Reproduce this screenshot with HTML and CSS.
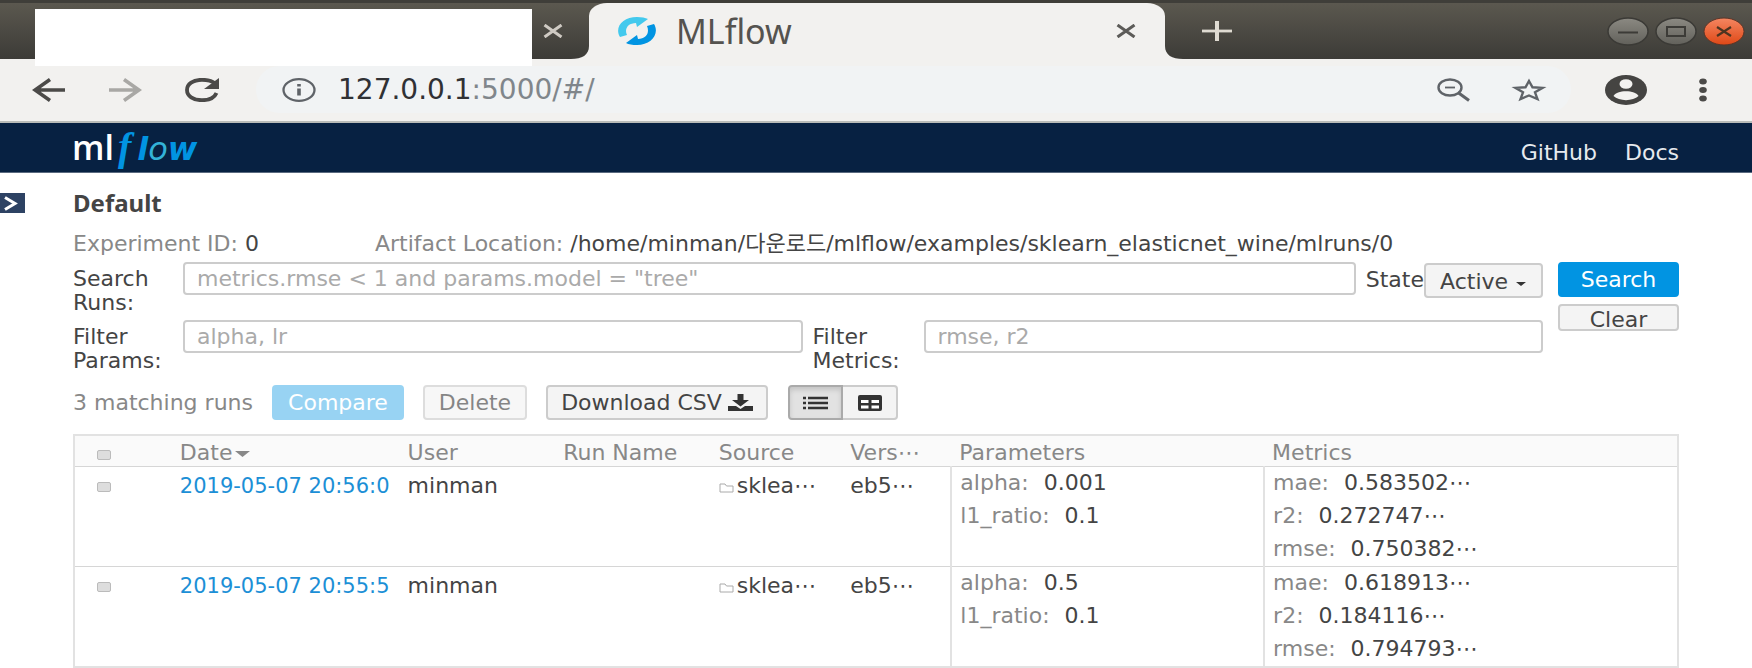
FILE: index.html
```html
<!DOCTYPE html>
<html lang="en">
<head>
<meta charset="utf-8">
<title>MLflow</title>
<link rel="stylesheet" href="styles.css">
</head>
<body>
<header class="browser">
  <div class="tabstrip">
    <div class="tab-blank"></div>
    <button class="icon-btn tab-close" aria-label="Close tab"><svg width="20" height="14" viewBox="0 0 20 14"><path d="M1.500 1L18.500 13M18.500 1L1.500 13" stroke="#cfcac3" stroke-width="3"/></svg></button>
    <div class="tab-active">
      <svg class="tab-curve left" width="18" height="13" viewBox="0 0 18 13"><path d="M18 0V13H0C11 13 18 9 18 0Z" fill="#f2f1ef"/></svg>
      <svg width="40" height="28" viewBox="0 0 40 28"><path d="M3 20C-3 10 6 0 20 0Q27 0 31 2L20 10L19 6C11 6 7 12 10 18Z" fill="#43c9ed"/><path d="M37 7C43 17 34 28 20 28Q13 28 9 26L20 18L21 22C29 22 33 16 30 9Z" fill="#0194e2"/></svg>
      <span class="tab-title">MLflow</span>
      <button class="icon-btn" aria-label="Close tab"><svg width="20" height="14" viewBox="0 0 20 14"><path d="M1.500 1L18.500 13M18.500 1L1.500 13" stroke="#5c5b58" stroke-width="3"/></svg></button>
      <svg class="tab-curve right" width="18" height="13" viewBox="0 0 18 13"><path d="M0 0V13H18C7 13 0 9 0 0Z" fill="#f2f1ef"/></svg>
    </div>
    <button class="icon-btn tab-new" aria-label="New tab"><svg width="30" height="20" viewBox="0 0 30 20"><path d="M0 10H30" stroke="#dfdbd2" stroke-width="2.800"/><path d="M15 0V20" stroke="#dfdbd2" stroke-width="4"/></svg></button>
    <div class="window-controls">
      <button class="icon-btn" aria-label="Minimize"><svg width="42" height="29" viewBox="0 0 42 29"><defs><linearGradient id="grey" x2="0" y2="1"><stop stop-color="#8b8982"/><stop offset="1" stop-color="#62615b"/></linearGradient><linearGradient id="orange" x2="0" y2="1"><stop stop-color="#f48661"/><stop offset="1" stop-color="#df4816"/></linearGradient></defs><ellipse cx="21" cy="14.500" rx="20" ry="13.500" fill="url(#grey)" stroke="#3b3a36" stroke-width="1.500"/><path d="M11 15.500H31" stroke="#3c3b37" stroke-width="2"/></svg></button>
      <button class="icon-btn" aria-label="Maximize"><svg width="42" height="29" viewBox="0 0 42 29"><ellipse cx="21" cy="14.500" rx="20" ry="13.500" fill="url(#grey)" stroke="#3b3a36" stroke-width="1.500"/><rect x="12" y="10" width="18" height="9" fill="none" stroke="#3c3b37" stroke-width="2"/></svg></button>
      <button class="icon-btn" aria-label="Close"><svg width="42" height="29" viewBox="0 0 42 29"><ellipse cx="21" cy="14.500" rx="20" ry="13.500" fill="url(#orange)" stroke="#5a3528" stroke-width="1"/><path d="M14 10L28 19M28 10L14 19" stroke="#4c3420" stroke-width="2.200"/></svg></button>
    </div>
  </div>
  <div class="toolbar">
    <button class="icon-btn" aria-label="Back"><svg width="34" height="24" viewBox="0 0 34 24"><path d="M33 12H3M18 1.500L3 12L18 22.500" fill="none" stroke="#4b4a48" stroke-width="3.600"/></svg></button>
    <button class="icon-btn" aria-label="Forward"><svg width="34" height="24" viewBox="0 0 34 24"><path d="M1 12H31M16 1.500L31 12L16 22.500" fill="none" stroke="#a9a8a5" stroke-width="3.600"/></svg></button>
    <button class="icon-btn reload" aria-label="Reload"><svg width="36" height="24" viewBox="0 0 36 24"><path d="M31 5.500C27 2 22.500 1.800 18 1.800C9 1.800 3 6 3 12S9 22.200 18 22.200C25 22.200 30.500 19.500 32.500 15" fill="none" stroke="#4b4a48" stroke-width="3.800"/><path d="M35 0V11H20Z" fill="#4b4a48"/></svg></button>
    <div class="address">
      <svg width="34" height="24" viewBox="0 0 34 24"><ellipse cx="17" cy="12" rx="15.500" ry="10.800" fill="none" stroke="#5f6368" stroke-width="2.300"/><path d="M17 10.500V17.500M17 6V8.500" stroke="#5f6368" stroke-width="3.600"/></svg>
      <span class="url"><span class="host">127.0.0.1</span>:5000/#/</span>
      <button class="icon-btn zoom" aria-label="Zoom"><svg width="34" height="24" viewBox="0 0 34 24"><ellipse cx="13" cy="9.500" rx="11.500" ry="8" fill="none" stroke="#5f6368" stroke-width="2.400"/><path d="M8 9.500H18" stroke="#5f6368" stroke-width="1.800"/><path d="M21 14.500L32 22.500" stroke="#5f6368" stroke-width="3"/></svg></button>
      <button class="icon-btn" aria-label="Bookmark"><svg width="36" height="24" viewBox="0 0 36 24"><path d="M18 3L21.500 9.300L31.500 9.900L24 14.300L26.500 21L18 17.500L9.500 21L12 14.300L4.500 9.900L14.500 9.300Z" fill="none" stroke="#5f6368" stroke-width="2.400"/></svg></button>
    </div>
    <button class="icon-btn profile" aria-label="Profile"><svg width="42" height="30" viewBox="0 0 42 30"><ellipse cx="21" cy="15" rx="21" ry="15" fill="#454442"/><ellipse cx="21" cy="9" rx="6.500" ry="4.800" fill="#f2f1ef"/><path d="M8.500 21C11 14.500 31 14.500 33.500 21C28 26.500 14 26.500 8.500 21Z" fill="#f2f1ef"/></svg></button>
    <button class="icon-btn" aria-label="Menu"><svg width="8" height="24" viewBox="0 0 8 24"><g fill="#4b4a48"><ellipse cx="4" cy="3.500" rx="3.800" ry="2.900"/><ellipse cx="4" cy="12" rx="3.800" ry="2.900"/><ellipse cx="4" cy="20.500" rx="3.800" ry="2.900"/></g></svg></button>
  </div>
</header>
<nav class="navbar">
  <a class="brand" href="#/" aria-label="mlflow"><span class="brand-ml">ml</span><span class="brand-f">f</span><span class="brand-low">l<span class="brand-o">o</span>w</span></a>
  <div class="nav-links"><a href="#github">GitHub</a><a href="#docs">Docs</a></div>
</nav>
<main class="page">
  <button class="icon-btn expander" aria-label="Show experiments"><svg width="25" height="20" viewBox="0 0 25 20"><rect width="25" height="20" fill="#2d4263"/><path d="M5 4.500L15 10.500L5 16.500" fill="none" stroke="#fff" stroke-width="3"/></svg></button>
  <div class="content">
    <h1>Default</h1>
    <div class="meta">
      <div class="meta-id"><span>Experiment ID:</span> <b>0</b></div>
      <div><span>Artifact Location:</span> <b>/home/minman/다운로드/mlflow/examples/sklearn_elasticnet_wine/mlruns/0</b></div>
    </div>
    <form class="search">
      <div class="fields">
        <div class="field-row">
          <label for="q">Search Runs:</label>
          <input id="q" type="text" placeholder="metrics.rmse &lt; 1 and params.model = &quot;tree&quot;">
          <div class="state">
            <label for="state">State</label>
            <div class="select"><select id="state" class="btn"><option>Active</option></select><svg width="10" height="4" viewBox="0 0 10 4"><path d="M0 0H10L5 4Z" fill="#333"/></svg></div>
          </div>
        </div>
        <div class="field-row">
          <label for="fp">Filter Params:</label>
          <input id="fp" type="text" placeholder="alpha, lr">
          <label class="metrics-label" for="fm">Filter Metrics:</label>
          <input id="fm" type="text" placeholder="rmse, r2">
        </div>
      </div>
      <div class="actions">
        <button type="button" class="btn primary">Search</button>
        <button type="button" class="btn clear">Clear</button>
      </div>
    </form>
    <div class="tools">
      <span class="count">3 matching runs</span>
      <button class="btn primary compare" disabled>Compare</button>
      <button class="btn delete" disabled>Delete</button>
      <button class="btn download">Download CSV <svg width="25" height="17" viewBox="0 0 25 17"><path d="M9.500 0H15.500V6H21L12.500 12.500L4 6H9.500Z" fill="#333"/><path d="M0 12H8L12.500 15L17 12H25V17H0Z" fill="#333"/></svg></button>
      <div class="toggle">
        <button class="btn on" aria-label="List view"><svg width="25" height="14" viewBox="0 0 25 14"><path d="M0 2H3M5 2H25M0 7H3M5 7H25M0 12H3M5 12H25" stroke="#333" stroke-width="2.600"/></svg></button>
        <button class="btn" aria-label="Table view"><svg width="24" height="16" viewBox="0 0 24 16"><rect width="24" height="16" rx="2" fill="#333"/><path d="M3 5H10.500V8H3ZM13.500 5H21V8H13.500ZM3 10.500H10.500V13.500H3ZM13.500 10.500H21V13.500H13.500Z" fill="#fff"/></svg></button>
      </div>
    </div>
    <table>
      <colgroup><col class="c-check"><col class="c-date"><col class="c-user"><col class="c-user"><col class="c-source"><col class="c-version"><col class="c-params"><col></colgroup>
      <thead>
        <tr><th class="check"><input type="checkbox" aria-label="Select all"></th><th>Date<svg width="15" height="6" viewBox="0 0 15 6"><path d="M0 0H15L7.500 6Z" fill="#888"/></svg></th><th>User</th><th>Run Name</th><th>Source</th><th>Vers⋯</th><th>Parameters</th><th>Metrics</th></tr>
      </thead>
      <tbody>
        <tr>
          <td class="check"><input type="checkbox" aria-label="Select run"></td><td><a href="#run1">2019-05-07 20:56:0</a></td><td>minman</td><td></td>
          <td><svg width="15" height="10" viewBox="0 0 15 10"><path d="M1 9V1H6L7.500 3H14V9Z" fill="none" stroke="#aaa"/></svg>sklea⋯</td><td>eb5⋯</td>
          <td class="kv"><div><span>alpha:</span>0.001</div><div><span>l1_ratio:</span>0.1</div></td>
          <td class="kv"><div><span>mae:</span>0.583502⋯</div><div><span>r2:</span>0.272747⋯</div><div><span>rmse:</span>0.750382⋯</div></td>
        </tr>
        <tr>
          <td class="check"><input type="checkbox" aria-label="Select run"></td><td><a href="#run2">2019-05-07 20:55:5</a></td><td>minman</td><td></td>
          <td><svg width="15" height="10" viewBox="0 0 15 10"><path d="M1 9V1H6L7.500 3H14V9Z" fill="none" stroke="#aaa"/></svg>sklea⋯</td><td>eb5⋯</td>
          <td class="kv"><div><span>alpha:</span>0.5</div><div><span>l1_ratio:</span>0.1</div></td>
          <td class="kv"><div><span>mae:</span>0.618913⋯</div><div><span>r2:</span>0.184116⋯</div><div><span>rmse:</span>0.794793⋯</div></td>
        </tr>
      </tbody>
    </table>
  </div>
</main>
</body>
</html>
```
FILE: styles.css
```css
* { box-sizing: border-box; }
body {
  margin: 0;
  background: #fff;
  color: #444;
  font: 22px/24px "DejaVu Sans", "Noto Sans CJK KR", sans-serif;
  overflow: hidden;
}
svg { display: block; flex: none; }
button, input, select { font: inherit; color: inherit; }
a { color: inherit; text-decoration: none; }
.icon-btn { display: block; flex: none; margin: 0; padding: 0; border: 0; background: none; }

.tabstrip {
  display: flex;
  align-items: center;
  height: 59px;
  padding: 3px 7px 0 35px;
  background: linear-gradient(#3f3e39 0 3px, #5b584f 3px, #3c3b37);
}
.tab-blank {
  position: relative;
  z-index: 1;
  align-self: flex-start;
  flex: 0 1 497px;
  height: 57px;
  margin: 6px 11px 0 0;
  background: #fff;
}
.tab-active {
  position: relative;
  display: flex;
  align-items: center;
  flex: 0 1 576px;
  height: 56px;
  margin-left: 26px;
  padding: 0 29px 0 28px;
  border-radius: 18px 18px 0 0 / 13px 13px 0 0;
  background: #f2f1ef;
}
.tab-curve { position: absolute; bottom: 0; }
.tab-curve.left { right: 100%; }
.tab-curve.right { left: 100%; }
.tab-title { flex: 1; margin-left: 19px; color: #55534f; font: 34px/40px "Noto Sans", sans-serif; }
.tab-new { margin-left: 37px; }
.window-controls { display: flex; gap: 6px; margin-left: auto; }

.toolbar {
  display: flex;
  align-items: center;
  height: 64px;
  padding: 0 45px 1px 32px;
  border-bottom: 2px solid #b9bcb9;
  background: #f2f1ef;
}
.toolbar > .icon-btn + .icon-btn { margin-left: 42px; }
.address {
  display: flex;
  align-items: center;
  flex: 1;
  height: 47px;
  margin: 0 34px 0 36px;
  padding: 0 24px 0 26px;
  border-radius: 24px;
  background: #f1f3f4;
}
.url { flex: 1; margin-left: 22px; color: #80868b; font-size: 28px; }
.host { color: #303134; }
.zoom { margin-right: 40px; }
.toolbar > .profile + .icon-btn { margin-left: 52px; }

.navbar {
  display: flex;
  align-items: center;
  justify-content: space-between;
  height: 50px;
  padding: 0 73px 0 72px;
  border-bottom: 1px solid #5a6a80;
  background: #072142;
  color: #e6eaee;
}
.brand { display: flex; align-items: baseline; font-size: 32px; line-height: 40px; }
.brand-ml { color: #fff; font-family: "Open Sans", sans-serif; font-size: 34px; font-weight: 600; }
.brand-f { padding: 0 6px 0 4px; color: #0194e2; font: italic bold 40px/40px "Liberation Serif", serif; }
.brand-low { color: #0194e2; font-style: italic; font-weight: 700; }
.brand-o { color: #33b3d8; font-weight: 400; }
.nav-links { display: flex; gap: 28px; padding-top: 11px; }

.page { display: flex; }
.expander { width: 25px; margin: 20px 48px 0 0; align-self: flex-start; }
.content { flex: 1; min-width: 0; margin-right: 73px; padding-top: 18px; }
h1 { margin: 0; font: bold 24px/24px "Noto Sans", sans-serif; }
.meta { display: flex; height: 24px; margin-top: 17px; color: #888; white-space: nowrap; }
.meta-id { width: 302px; }
.meta b { color: #444; font-weight: 400; }

.search { display: flex; gap: 15px; margin-top: 6px; }
.fields { flex: 1; min-width: 0; }
.field-row { display: flex; height: 58px; }
.field-row > label { flex: 0 0 110px; padding: 5px 16px 0 0; }
.field-row > input {
  flex: 1;
  min-width: 0;
  height: 33px;
  padding: 0 12px;
  border: 2px solid #ccc;
  border-radius: 4px;
}
.field-row > .metrics-label { flex: 0 0 121px; padding-left: 10px; }
::placeholder { color: #aaa; opacity: 1; }
.state { display: flex; flex: 0 0 187px; justify-content: flex-end; }
.state label { padding-top: 6px; }
.select { position: relative; width: 119px; flex: none; padding-top: 1px; }
.select svg { position: absolute; right: 17px; top: 20px; }
.btn {
  display: block;
  height: 35px;
  padding: 0;
  border: 2px solid #ccc;
  border-radius: 4px;
  background: #f4f4f4;
  line-height: 24px;
  white-space: nowrap;
}
.select select { width: 100%; padding: 2px 0 0 14px; appearance: none; }
.actions { width: 121px; }
.actions .btn { width: 100%; }
.btn.primary { border-color: #0194e2; background: #0194e2; color: #fff; }
.actions .clear { height: 27px; margin-top: 7px; padding-top: 4px; line-height: 20px; }

.tools { display: flex; align-items: center; height: 35px; margin-top: 7px; }
.count { width: 199px; color: #888; }
.compare { width: 132px; opacity: .4; }
.delete { width: 104px; margin-left: 19px; opacity: .65; }
.download { display: flex; align-items: center; justify-content: center; gap: 6px; width: 222px; margin-left: 19px; }
.toggle { display: flex; margin-left: 20px; }
.toggle .btn { display: grid; place-items: center; width: 55px; border-left: 0; border-radius: 0 4px 4px 0; }
.toggle .on { border: 2px solid #aaa; border-radius: 4px 0 0 4px; background: #e2e2e2; box-shadow: inset 0 3px 5px #0002; }

table { width: 100%; margin-top: 14px; border-collapse: collapse; table-layout: fixed; border: 2px solid #e2e2e2; }
.c-check { width: 6.100%; }
.c-date { width: 14.200%; }
.c-user { width: 9.700%; }
.c-source { width: 8.200%; }
.c-version { width: 6.800%; }
.c-params { width: 19.500%; }
th { height: 31px; padding: 5px 0 0 8px; background: #fafafa; color: #888; font-weight: 400; text-align: left; white-space: nowrap; }
th svg { display: inline-block; margin: 0 0 3px 3px; }
td { height: 100px; padding: 7px 0 0 8px; border-top: 1px solid #d6d6d6; vertical-align: top; line-height: 24px; white-space: nowrap; }
td a { color: #1c8fd6; font-size: 21px; }
td > svg { display: inline-block; margin-right: 3px; }
.check { padding-left: 22px; }
.check input { display: block; width: 14px; height: 10px; margin: 8px 0 0; appearance: none; border: 1px solid #bbb; border-radius: 2px; background: #ddd; }
th.check input { margin: 3px 0 0; }
.kv { padding-top: 0; border-left: 2px solid #e2e2e2; }
.kv div { height: 33px; line-height: 31px; }
.kv span { margin-right: 15px; color: #888; }
```
